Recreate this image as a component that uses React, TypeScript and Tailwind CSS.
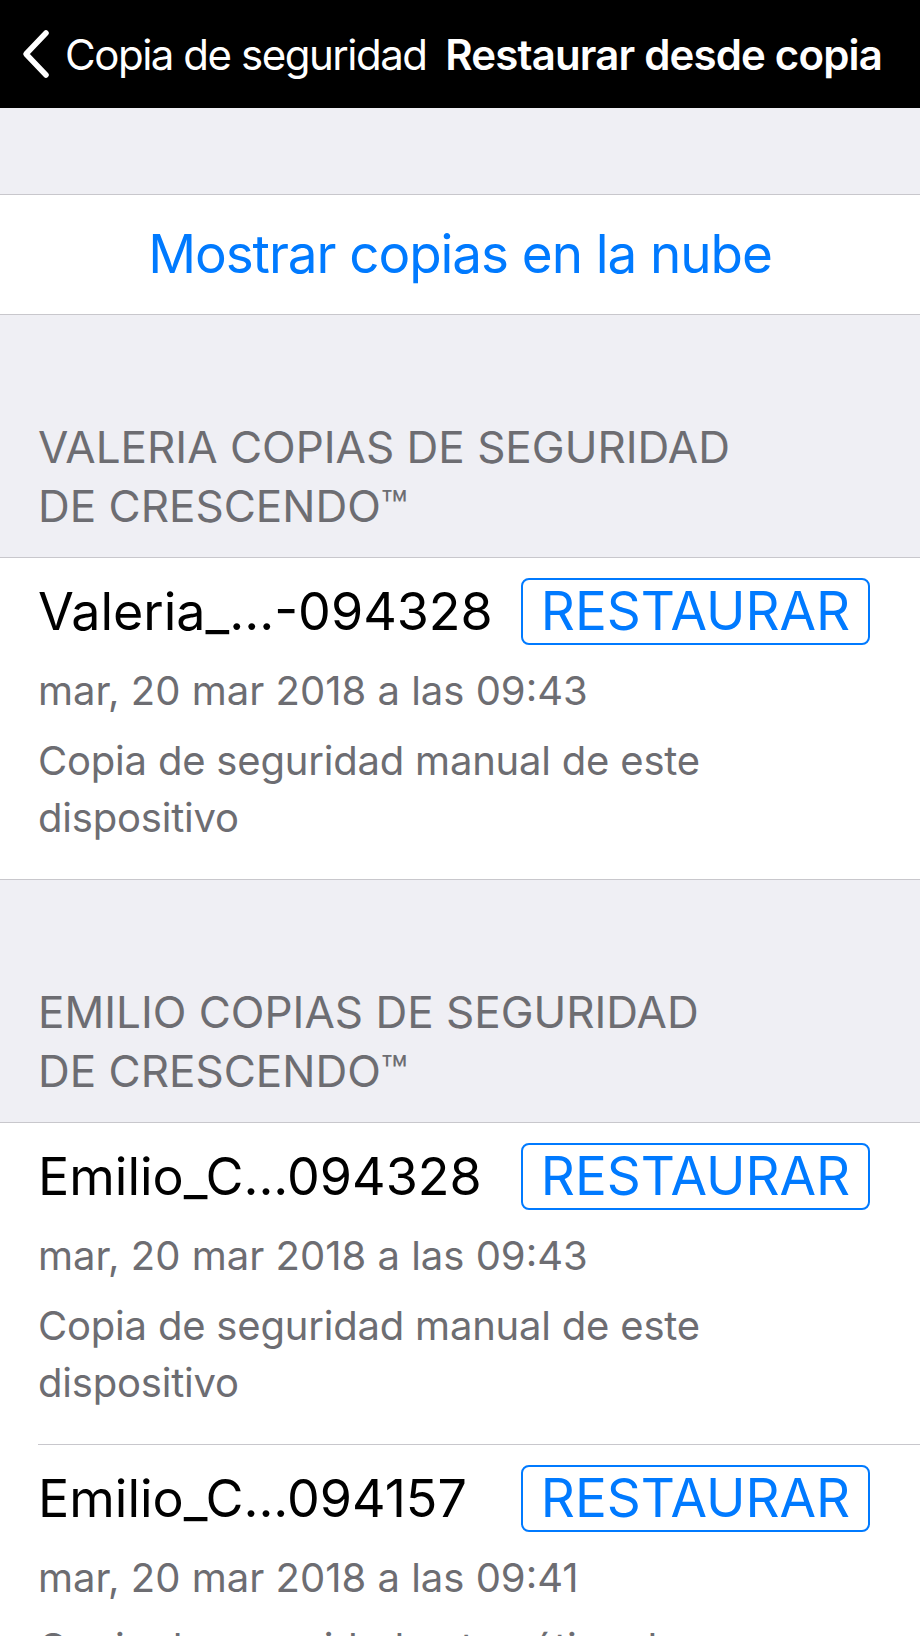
const font = { fontFamily: "Inter, 'Noto Sans', sans-serif" };

type Backup = { name: string; date: string; desc: string };

const sections: { title: string[]; items: Backup[] }[] = [
  {
    title: ["VALERIA COPIAS DE SEGURIDAD", "DE CRESCENDO™"],
    items: [
      {
        name: "Valeria_...-094328",
        date: "mar, 20 mar 2018 a las 09:43",
        desc: "Copia de seguridad manual de este dispositivo",
      },
    ],
  },
  {
    title: ["EMILIO COPIAS DE SEGURIDAD", "DE CRESCENDO™"],
    items: [
      {
        name: "Emilio_C...094328",
        date: "mar, 20 mar 2018 a las 09:43",
        desc: "Copia de seguridad manual de este dispositivo",
      },
      {
        name: "Emilio_C...094157",
        date: "mar, 20 mar 2018 a las 09:41",
        desc: "Copia de seguridad automática de este dispositivo",
      },
    ],
  },
];

function BackupCell({ item, last }: { item: Backup; last: boolean }) {
  return (
    <div className="pl-[38px]">
      <div className={"pr-[50px] pt-[20px] pb-[33px] " + (last ? "" : "border-b border-[#c8c7cc]")}>
        <div className="flex items-center justify-between h-[67px]">
          <span className="text-[52px] leading-none text-black">{item.name}</span>
          <button className="h-[67px] w-[349px] rounded-[8px] border-[2px] border-[#007aff] text-[#007aff] text-[53px] leading-none flex items-center justify-center">
            RESTAURAR
          </button>
        </div>
        <div className="mt-[17px] text-[40px] leading-[57px] text-[#6d6d72]">{item.date}</div>
        <div className="mt-[13px] text-[40px] leading-[57px] text-[#6d6d72] tracking-[-0.005em] max-w-[700px]">
          {item.desc}
        </div>
      </div>
    </div>
  );
}

export default function App() {
  return (
    <div className="w-[920px] h-[1636px] overflow-hidden bg-[#efeff4]" style={font}>
      <div className="h-[108px] bg-black text-white flex items-center pl-[21px] pr-[38px]">
        <svg width="30" height="50" viewBox="0 0 30 50" className="shrink-0">
          <polyline
            points="25,4 5,25 25,46"
            fill="none"
            stroke="white"
            strokeWidth="5.5"
            strokeLinecap="round"
            strokeLinejoin="round"
          />
        </svg>
        <span className="ml-[14px] text-[42px] tracking-[-0.035em]">Copia de seguridad</span>
        <span className="ml-auto text-[42px] font-semibold tracking-[-0.02em]">Restaurar desde copia</span>
      </div>

      <div className="h-[86px]" />

      <div className="h-[121px] bg-white border-y border-[#c8c7cc] flex items-center justify-center">
        <span className="text-[53px] text-[#007aff] tracking-[-0.02em]">Mostrar copias en la nube</span>
      </div>

      {sections.map((s) => (
        <div key={s.title[0]}>
          <div className="pl-[38px] pt-[103px] pb-[21px] text-[44px] leading-[59px] text-[#6d6d72]">
            {s.title.map((t) => (
              <div key={t}>{t}</div>
            ))}
          </div>
          <div className="bg-white border-y border-[#c8c7cc]">
            {s.items.map((it, i) => (
              <BackupCell key={it.name} item={it} last={i === s.items.length - 1} />
            ))}
          </div>
        </div>
      ))}
    </div>
  );
}
